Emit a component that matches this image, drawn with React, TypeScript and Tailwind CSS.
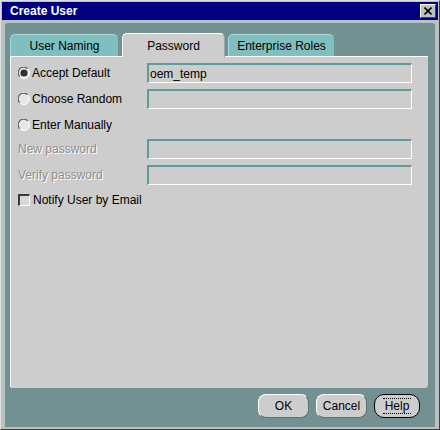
import React from 'react'

function Radio({ checked }: { checked?: boolean }) {
  return (
    <svg width="12" height="12" viewBox="0 0 12 12" className="shrink-0">
      <circle cx="6" cy="6" r="5.5" fill="#e6e6e6" stroke="#ffffff" />
      <path d="M1.8 9.6 A5.2 5.2 0 0 1 9.6 1.8" stroke="#5a5a5a" strokeWidth="1.2" fill="none" />
      {checked && <circle cx="6" cy="6" r="3.6" fill="#2f2f2f" />}
    </svg>
  )
}

function Field({ value }: { value?: string }) {
  return (
    <div className="w-[265px] h-[20px] border-t-[2px] border-l-[2px] border-t-[#5e9c9c] border-l-[#5e9c9c] border-b border-r border-b-white border-r-white bg-[#cdcdcd] flex items-center pl-[1px] text-[12px] text-black">
      {value}
    </div>
  )
}

function Button({ label, focused }: { label: string; focused?: boolean }) {
  if (focused) {
    return (
      <div className="w-[46px] h-[24px] rounded-[10px] border border-black bg-[#cdcdcd] flex items-center justify-center">
        <span className="border-y border-dotted border-black leading-[14px] px-[2px]">{label}</span>
      </div>
    )
  }
  return (
    <div className="w-[51px] h-[24px] rounded-[8px] border border-t-white border-l-white border-b-[#5f6f6f] border-r-[#5f6f6f] bg-[#cdcdcd] flex items-center justify-center">
      {label}
    </div>
  )
}

export default function App() {
  return (
    <div className="w-[440px] h-[430px] bg-[#c0c0c0] border border-t-[#e0e0e0] border-l-[#e0e0e0] border-r-[#404040] border-b-[#404040] p-[1px] flex flex-col font-['Liberation_Sans',Arial,sans-serif] text-[12px] text-black">
      {/* Title bar */}
      <div className="h-[18px] bg-[#000080] flex items-center justify-between pl-[8px] pr-[2px]">
        <span className="text-white font-bold text-[12px]">Create User</span>
        <div className="w-[16px] h-[14px] bg-[#c0c0c0] border border-t-white border-l-white border-b-[#404040] border-r-[#404040] flex items-center justify-center">
          <svg width="8" height="8" viewBox="0 0 8 8">
            <path d="M0.5 0.5 L7.5 7.5 M7.5 0.5 L0.5 7.5" stroke="#000" strokeWidth="1.6" />
          </svg>
        </div>
      </div>

      {/* Body */}
      <div className="mt-[2px] mx-[2px] flex-1 bg-[#739191] border border-[#a9c5c5] rounded-t-[4px] pt-[10px] pl-[5px] pr-[7px] flex flex-col">
        {/* Tabs */}
        <div className="flex items-end h-[23px]">
          <div className="w-[108px] h-[22px] bg-[#7fbfbf] rounded-t-[5px] border-t border-l border-[#a8d8d8] flex items-center justify-center">
            User Naming
          </div>
          <div className="relative z-10 -mb-[1px] ml-[4px] w-[103px] h-[24px] bg-[#cdcdcd] rounded-t-[5px] border-t border-l border-white border-r border-r-[#8fa8a8] flex items-center justify-center">
            Password
          </div>
          <div className="ml-[3px] w-[106px] h-[22px] bg-[#7fbfbf] rounded-t-[5px] border-t border-l border-[#a8d8d8] flex items-center justify-center">
            Enterprise Roles
          </div>
        </div>

        {/* Panel */}
        <div className="w-[418px] h-[332px] bg-[#cdcdcd] border-t border-l border-white rounded-b-[3px] pl-[7px] pt-[6px] flex flex-col">
          <div className="flex items-center h-[20px]">
            <div className="w-[129px] flex items-center gap-[2px]">
              <Radio checked />
              <span>Accept Default</span>
            </div>
            <Field value="oem_temp" />
          </div>
          <div className="flex items-center h-[20px] mt-[6px]">
            <div className="w-[129px] flex items-center gap-[2px]">
              <Radio />
              <span>Choose Random</span>
            </div>
            <Field />
          </div>
          <div className="flex items-center h-[20px] mt-[6px]">
            <div className="w-[129px] flex items-center gap-[2px]">
              <Radio />
              <span>Enter Manually</span>
            </div>
          </div>
          <div className="flex items-center h-[20px] mt-[4px]">
            <div className="w-[129px] text-[#8e8e8e] [text-shadow:1px_1px_0_#ffffff]">New password</div>
            <Field />
          </div>
          <div className="flex items-center h-[20px] mt-[6px]">
            <div className="w-[129px] text-[#8e8e8e] [text-shadow:1px_1px_0_#ffffff]">Verify password</div>
            <Field />
          </div>
          <div className="flex items-center h-[20px] mt-[5px] gap-[3px]">
            <div className="w-[12px] h-[12px] border-t-[2px] border-l-[2px] border-t-[#3a3a3a] border-l-[#3a3a3a] border-b border-r border-b-white border-r-white bg-[#d8d8d8]" />
            <span>Notify User by Email</span>
          </div>
        </div>

        {/* Buttons */}
        <div className="mt-[6px] flex justify-end gap-[7px] pr-[8px]">
          <Button label="OK" />
          <Button label="Cancel" />
          <Button label="Help" focused />
        </div>
      </div>
    </div>
  )
}
